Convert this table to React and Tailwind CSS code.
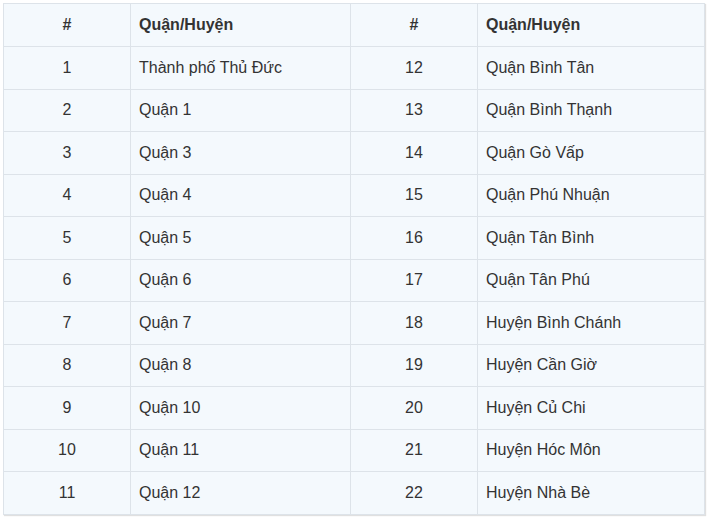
import React from 'react'

const left = [
  "Thành phố Thủ Đức", "Quận 1", "Quận 3", "Quận 4", "Quận 5", "Quận 6",
  "Quận 7", "Quận 8", "Quận 10", "Quận 11", "Quận 12",
];
const right = [
  "Quận Bình Tân", "Quận Bình Thạnh", "Quận Gò Vấp", "Quận Phú Nhuận", "Quận Tân Bình",
  "Quận Tân Phú", "Huyện Bình Chánh", "Huyện Cần Giờ", "Huyện Củ Chi", "Huyện Hóc Môn", "Huyện Nhà Bè",
];

const App = () => {
  return (
    <div className="w-[708px] h-[518px] bg-white pt-[3px] pl-[3px] font-['Liberation_Sans',Arial,sans-serif] text-[16px] text-[#333333]">
      <table className="w-[702px] border-collapse bg-[#f4f9fd] border border-[#dde3e9] shadow-[1px_1px_1px_rgba(0,0,0,0.12)]">
        <colgroup>
          <col className="w-[127px]" />
          <col className="w-[220px]" />
          <col className="w-[127px]" />
          <col />
        </colgroup>
        <thead>
          <tr className="h-[43px] font-bold">
            <th className="border border-[#dde3e9] text-center font-bold">#</th>
            <th className="border border-[#dde3e9] text-left pl-[8px] font-bold">Quận/Huyện</th>
            <th className="border border-[#dde3e9] text-center font-bold">#</th>
            <th className="border border-[#dde3e9] text-left pl-[8px] font-bold">Quận/Huyện</th>
          </tr>
        </thead>
        <tbody>
          {left.map((name, i) => (
            <tr key={i} className="h-[42.5px]">
              <td className="border border-[#dde3e9] text-center">{i + 1}</td>
              <td className="border border-[#dde3e9] pl-[8px]">{name}</td>
              <td className="border border-[#dde3e9] text-center">{i + 12}</td>
              <td className="border border-[#dde3e9] pl-[8px]">{right[i]}</td>
            </tr>
          ))}
        </tbody>
      </table>
    </div>
  )
}

export default App;
